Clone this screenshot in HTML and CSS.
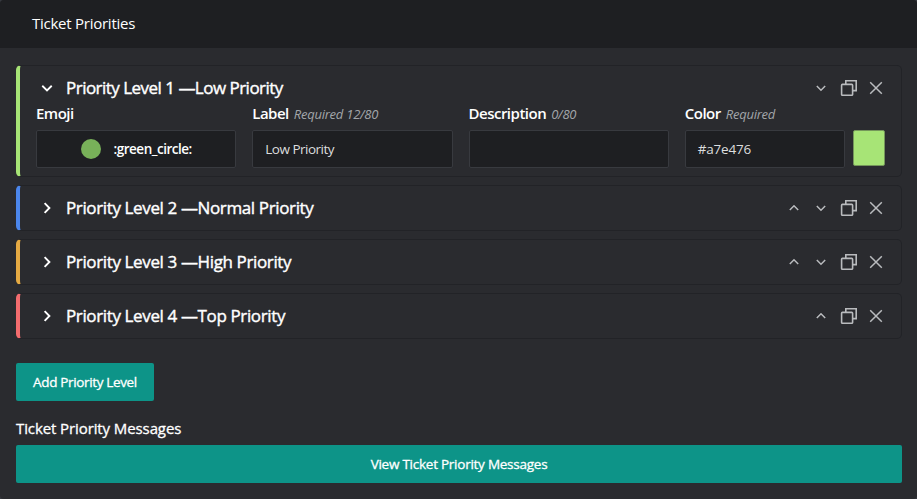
FILE: index.html
```html
<!DOCTYPE html>
<html lang="en">
<head>
<meta charset="utf-8">
<title>Ticket Priorities</title>
<link rel="stylesheet" href="styles.css">
</head>
<body>
<svg class="defs" aria-hidden="true">
  <symbol id="down" viewBox="0 0 16 16"><path d="M3.8 6 8 10.2 12.2 6"/></symbol>
  <symbol id="up" viewBox="0 0 16 16"><path d="M3.8 10 8 5.8 12.2 10"/></symbol>
  <symbol id="right" viewBox="0 0 16 16"><path d="M5.6 3.2 10.4 8 5.6 12.8"/></symbol>
  <symbol id="copy" viewBox="0 0 18 18"><rect x="1.6" y="5.4" width="11" height="10.8" rx=".8"/><path d="M5.8 5.4V1.8h10.4v9.8h-3.4"/></symbol>
  <symbol id="close" viewBox="0 0 16 16"><path d="m2.2 2.2 11.6 11.6M13.8 2.2 2.2 13.8"/></symbol>
</svg>
<section class="panel">
  <header class="panel-header"><span>Ticket Priorities</span></header>
  <main class="panel-body">
    <div class="cards">
      <article class="card low">
        <div class="card-head">
          <svg class="toggle open"><use href="#down"/></svg>
          <h2 class="tight">Priority Level 1 —Low Priority</h2>
          <div class="actions">
            <svg class="chev"><use href="#down"/></svg>
            <svg class="copy"><use href="#copy"/></svg>
            <svg class="close"><use href="#close"/></svg>
          </div>
        </div>
        <div class="fields">
          <div class="field">
            <div class="label"><b>Emoji</b></div>
            <div class="input emoji"><i class="dot"></i><span>:green_circle:</span></div>
          </div>
          <div class="field">
            <div class="label"><b>Label</b><em>Required 12/80</em></div>
            <div class="input"><span>Low Priority</span></div>
          </div>
          <div class="field">
            <div class="label"><b>Description</b><em>0/80</em></div>
            <div class="input"></div>
          </div>
          <div class="field">
            <div class="label"><b>Color</b><em>Required</em></div>
            <div class="color-row"><div class="input hex"><span>#a7e476</span></div><div class="swatch"></div></div>
          </div>
        </div>
      </article>
      <article class="card normal">
        <div class="card-head">
          <svg class="toggle"><use href="#right"/></svg>
          <h2>Priority Level 2 —Normal Priority</h2>
          <div class="actions">
            <svg class="chev"><use href="#up"/></svg>
            <svg class="chev"><use href="#down"/></svg>
            <svg class="copy"><use href="#copy"/></svg>
            <svg class="close"><use href="#close"/></svg>
          </div>
        </div>
      </article>
      <article class="card high">
        <div class="card-head">
          <svg class="toggle"><use href="#right"/></svg>
          <h2>Priority Level 3 —High Priority</h2>
          <div class="actions">
            <svg class="chev"><use href="#up"/></svg>
            <svg class="chev"><use href="#down"/></svg>
            <svg class="copy"><use href="#copy"/></svg>
            <svg class="close"><use href="#close"/></svg>
          </div>
        </div>
      </article>
      <article class="card top">
        <div class="card-head">
          <svg class="toggle"><use href="#right"/></svg>
          <h2>Priority Level 4 —Top Priority</h2>
          <div class="actions">
            <svg class="chev"><use href="#up"/></svg>
            <svg class="copy"><use href="#copy"/></svg>
            <svg class="close"><use href="#close"/></svg>
          </div>
        </div>
      </article>
    </div>
    <button class="btn add">Add Priority Level</button>
    <div class="section-label">Ticket Priority Messages</div>
    <button class="btn view">View Ticket Priority Messages</button>
  </main>
</section>
</body>
</html>
```
FILE: styles.css
```css
* { box-sizing: border-box; }
body {
  margin: 0;
  background: #36393f;
  color: #fff;
  font-family: "Open Sans", "Noto Sans", sans-serif;
}
.defs { position: absolute; width: 0; height: 0; }
svg { display: block; fill: none; stroke: currentColor; }
.panel {
  height: 499px;
  background: #2a2b2f;
  border-radius: 4px;
  overflow: hidden;
}
.panel-header {
  height: 48px;
  padding-left: 32px;
  background: #1e1f22;
  font-size: 15px;
  line-height: 46px;
  letter-spacing: -.25px;
}
.panel-body { padding: 17px 15px 0 16px; }
.cards { display: flex; flex-direction: column; gap: 8px; }
.card {
  height: 46px;
  padding: 0 16px;
  border: 1px solid #222327;
  border-left: 4px solid;
  border-radius: 5px;
}
.low { height: 112px; border-left-color: #a7e476; }
.normal { border-left-color: #4b86ec; }
.high { border-left-color: #e5aa43; }
.top { border-left-color: #f36c6e; }
.card-head { display: flex; align-items: center; height: 44px; }
.toggle { width: 16px; height: 16px; margin: 0 11px 0 3px; stroke-width: 1.9; }
.toggle.open { width: 18px; height: 18px; margin: 0 10px 0 2px; stroke-width: 1.6; }
h2 {
  margin: 0;
  font-size: 17px;
  line-height: 24px;
  font-weight: 400;
  letter-spacing: -.37px;
  -webkit-text-stroke: .4px currentColor;
}
h2.tight { letter-spacing: -.52px; }
.actions { display: flex; align-items: center; margin-left: auto; color: #b9bbbe; }
.chev { width: 16px; height: 16px; margin-right: 11px; stroke-width: 1.5; }
.copy { width: 18px; height: 18px; margin-right: 10px; stroke-width: 1.6; }
.close { width: 16px; height: 16px; margin-right: 1px; stroke-width: 1.5; }
.fields { display: grid; grid-template-columns: repeat(4, 1fr); column-gap: 16px; }
.label { height: 20px; margin-top: -7px; margin-bottom: 7px; line-height: 20px; white-space: nowrap; }
.label b { font-size: 15px; font-weight: 600; letter-spacing: -.5px; }
.label em { margin-left: 5px; color: #a3a6aa; font-size: 13px; letter-spacing: -.25px; }
.input {
  display: flex;
  align-items: center;
  height: 38px;
  padding: 0 12px;
  background: #1e1f22;
  border: 1px solid #383a3f;
  border-radius: 2px;
  color: #dcddde;
  font-size: 13.5px;
  letter-spacing: -.5px;
}
.input.hex { letter-spacing: -.2px; }
.emoji { justify-content: center; gap: 13px; color: #fff; font-weight: 600; }
.dot { width: 20px; height: 20px; border-radius: 50%; background: #78b159; }
.color-row { display: flex; gap: 8px; }
.color-row .input { flex: 1; }
.swatch { width: 32px; height: 36px; background: #a7e476; border: 1px solid #74965a; border-radius: 2px; }
.btn {
  display: block;
  height: 38px;
  padding: 0;
  border: 0;
  border-radius: 2px;
  background: #0d9488;
  color: #fff;
  font: inherit;
  font-size: 13.5px;
  letter-spacing: -.25px;
  -webkit-text-stroke: .3px currentColor;
}
.add { width: 138px; margin-top: 24px; letter-spacing: -.35px; }
.section-label {
  height: 24px;
  margin: 15px 0 5px;
  font-size: 15px;
  line-height: 24px;
  letter-spacing: -.1px;
  -webkit-text-stroke: .3px currentColor;
}
.view { width: 100%; }
```
